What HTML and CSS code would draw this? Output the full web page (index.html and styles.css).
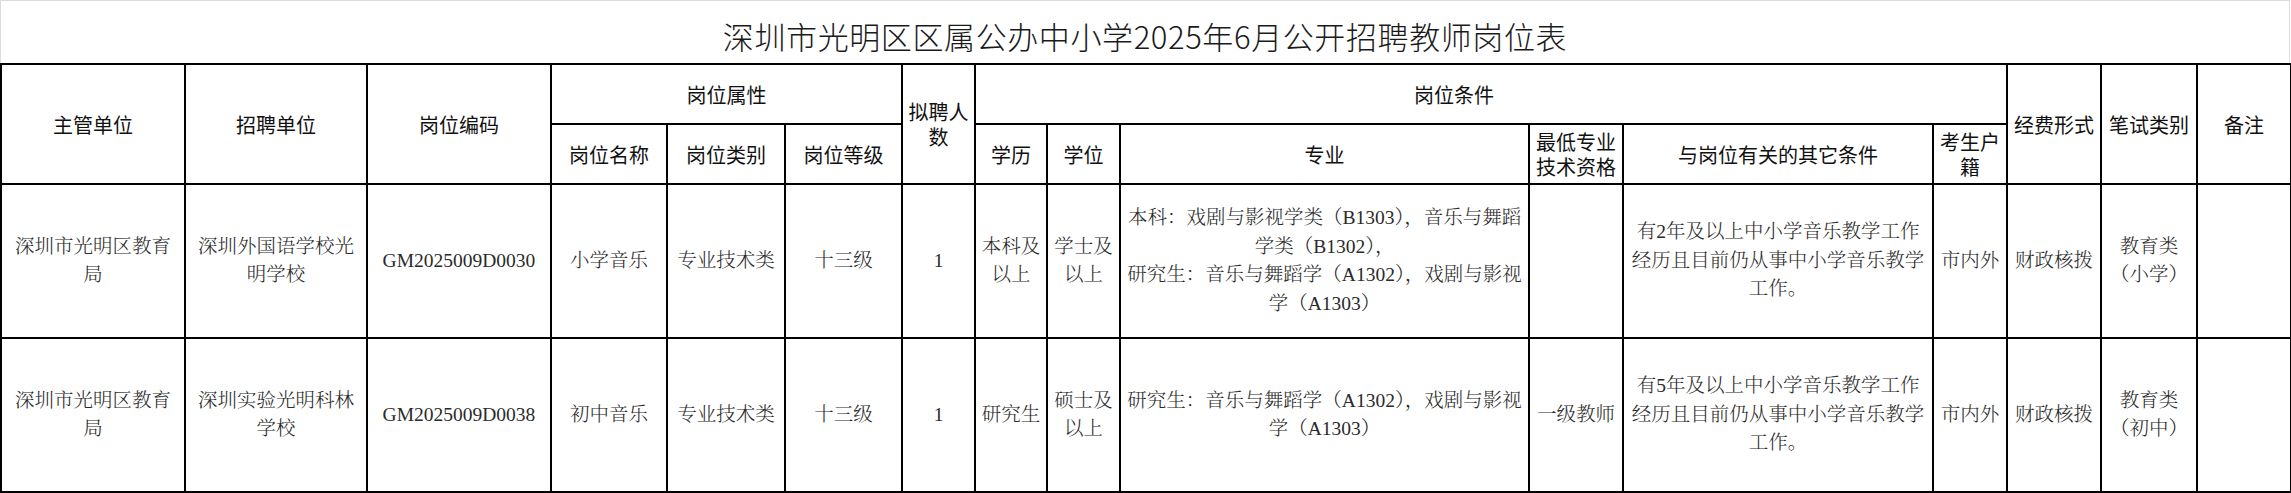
FILE: index.html
```html
<!DOCTYPE html>
<html lang="zh-CN">
<head>
<meta charset="utf-8">
<title>深圳市光明区区属公办中小学2025年6月公开招聘教师岗位表</title>
<link rel="stylesheet" href="styles.css">
</head>
<body>
<div class="sheet">
  <div class="title">深圳市光明区区属公办中小学2025年6月公开招聘教师岗位表</div>
  <table class="grid">
    <colgroup>
      <col class="w-org"><col class="w-unit"><col class="w-code">
      <col class="w-name"><col class="w-type"><col class="w-level">
      <col class="w-num">
      <col class="w-edu"><col class="w-deg"><col class="w-major"><col class="w-qual"><col class="w-other"><col class="w-hukou">
      <col class="w-fund"><col class="w-exam"><col class="w-note">
    </colgroup>
    <thead>
      <tr class="hrow">
        <th rowspan="2">主管单位</th>
        <th rowspan="2">招聘单位</th>
        <th rowspan="2">岗位编码</th>
        <th colspan="3">岗位属性</th>
        <th rowspan="2">拟聘人<br>数</th>
        <th colspan="6" class="cond">岗位条件</th>
        <th rowspan="2">经费形式</th>
        <th rowspan="2">笔试类别</th>
        <th rowspan="2">备注</th>
      </tr>
      <tr class="hrow">
        <th>岗位名称</th>
        <th>岗位类别</th>
        <th>岗位等级</th>
        <th>学历</th>
        <th>学位</th>
        <th>专业</th>
        <th>最低专业<br>技术资格</th>
        <th>与岗位有关的其它条件</th>
        <th>考生户<br>籍</th>
      </tr>
    </thead>
    <tbody>
      <tr class="brow">
        <td>深圳市光明区教育<br>局</td>
        <td>深圳外国语学校光<br>明学校</td>
        <td>GM2025009D0030</td>
        <td>小学音乐</td>
        <td>专业技术类</td>
        <td>十三级</td>
        <td>1</td>
        <td>本科及<br>以上</td>
        <td>学士及<br>以上</td>
        <td class="nw">本科：戏剧与影视学类（B1303），音乐与舞蹈<br>学类（B1302），<br>研究生：音乐与舞蹈学（A1302），戏剧与影视<br>学（A1303）</td>
        <td></td>
        <td class="nw">有2年及以上中小学音乐教学工作<br>经历且目前仍从事中小学音乐教学<br>工作。</td>
        <td>市内外</td>
        <td>财政核拨</td>
        <td>教育类<br>（小学）</td>
        <td></td>
      </tr>
      <tr class="brow">
        <td>深圳市光明区教育<br>局</td>
        <td>深圳实验光明科林<br>学校</td>
        <td>GM2025009D0038</td>
        <td>初中音乐</td>
        <td>专业技术类</td>
        <td>十三级</td>
        <td>1</td>
        <td>研究生</td>
        <td>硕士及<br>以上</td>
        <td class="nw">研究生：音乐与舞蹈学（A1302），戏剧与影视<br>学（A1303）</td>
        <td>一级教师</td>
        <td class="nw">有5年及以上中小学音乐教学工作<br>经历且目前仍从事中小学音乐教学<br>工作。</td>
        <td>市内外</td>
        <td>财政核拨</td>
        <td>教育类<br>（初中）</td>
        <td></td>
      </tr>
    </tbody>
  </table>
</div>
</body>
</html>
```

FILE: styles.css
```css
html, body {
  margin: 0;
  padding: 0;
  background: #ffffff;
}

.sheet {
  width: 2290px;
}

.title {
  box-sizing: border-box;
  height: 63px;
  padding-top: 6px;
  border: 1px solid #dcdcdc;
  border-bottom: 0;
  display: flex;
  align-items: center;
  justify-content: center;
  font-family: "Noto Sans CJK SC", sans-serif;
  font-size: 31px;
  font-weight: 300;
  color: #1a1a1a;
  letter-spacing: 0.6px;
}

.grid {
  border-collapse: collapse;
  table-layout: fixed;
  width: 2290px;
}

.grid th,
.grid td {
  border: 2px solid #000000;
  padding: 0 2px;
  text-align: center;
  vertical-align: middle;
  overflow: visible;
}

.grid th {
  font-family: "Noto Sans CJK SC", sans-serif;
  font-weight: 400;
  font-size: 20px;
  line-height: 25px;
  color: #111111;
}

.grid td {
  font-family: "Liberation Serif", "Noto Serif CJK SC", "Noto Sans CJK SC", serif;
  font-weight: 300;
  font-size: 19.5px;
  line-height: 28.5px;
  color: #2a2a2a;
}

.grid td.nw {
  white-space: nowrap;
}

.grid th.cond {
  padding-right: 76px;
}

.hrow {
  height: 60px;
}

.brow {
  height: 154px;
}

.w-org { width: 184px; }
.w-unit { width: 182px; }
.w-code { width: 184px; }
.w-name { width: 116px; }
.w-type { width: 118px; }
.w-level { width: 117px; }
.w-num { width: 73px; }
.w-edu { width: 72px; }
.w-deg { width: 73px; }
.w-major { width: 409px; }
.w-qual { width: 94px; }
.w-other { width: 310px; }
.w-hukou { width: 74px; }
.w-fund { width: 94px; }
.w-exam { width: 96px; }
.w-note { width: 94px; }
```
